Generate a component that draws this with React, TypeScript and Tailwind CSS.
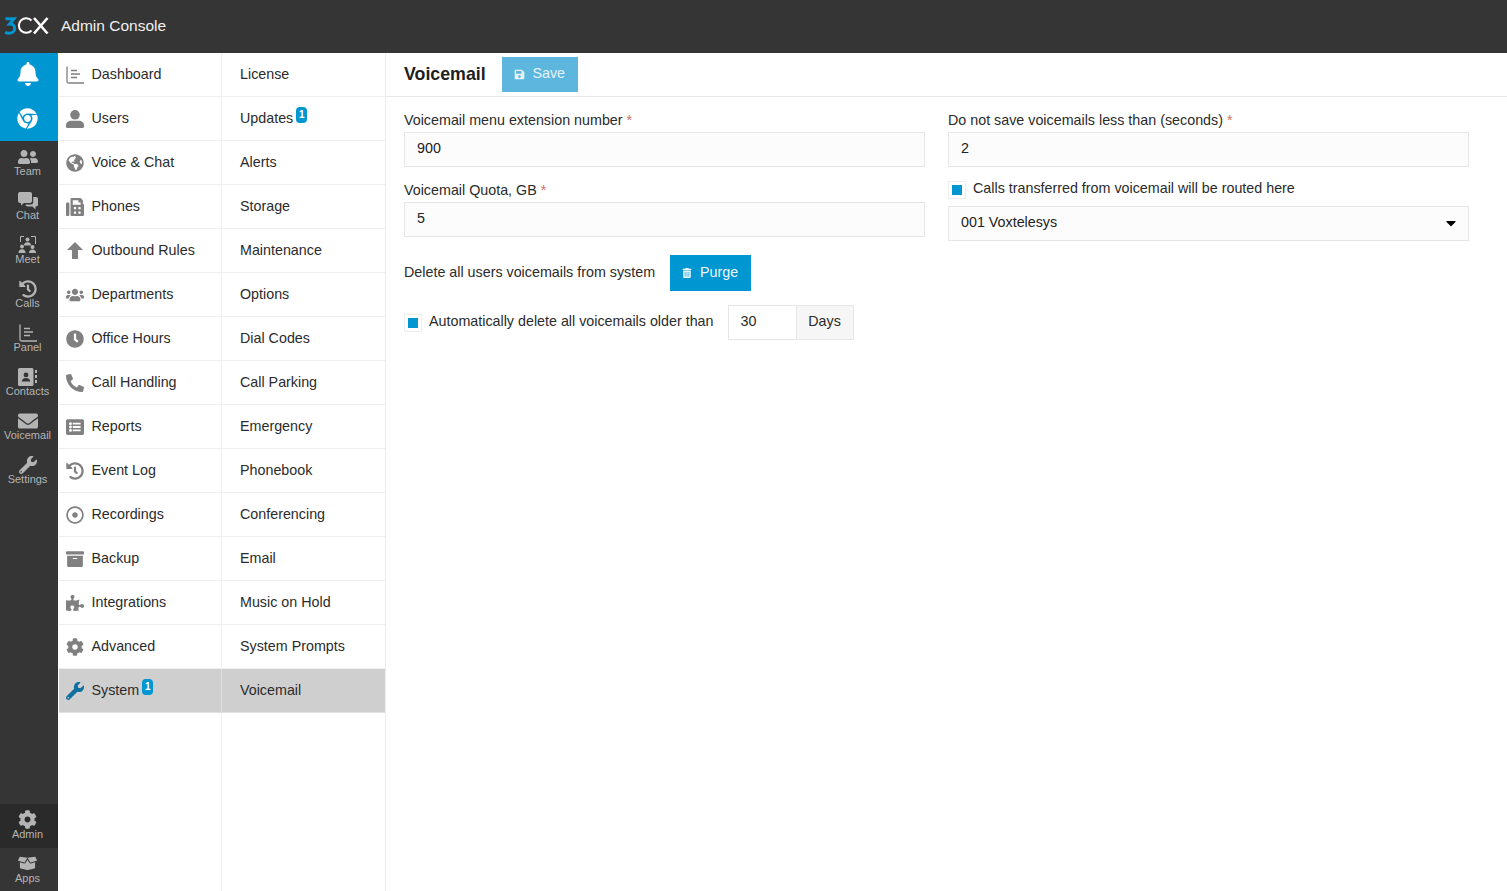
import React from "react";
import { FaBell, FaChrome, FaUserFriends, FaHistory, FaEnvelope, FaWrench, FaCog, FaBoxOpen, FaGlobeAmericas, FaFax, FaClock, FaPhone, FaListAlt, FaRegDotCircle, FaArchive, FaPuzzlePiece, FaSave, FaTrashAlt, FaCaretDown, FaUsers } from "react-icons/fa";

const Panel = ({ size = 18 }: { size?: number }) => (
  <svg width={size} height={size} viewBox="0 0 18 18" fill="none" stroke="currentColor" strokeWidth="1.3">
    <path d="M1 0.5V15.500Q1 17 2.500 17H18" />
    <path d="M5 4.500H11M5 8H14M5 11.500H11" />
  </svg>
);

const Meet = () => (
  <svg width="19" height="18" viewBox="0 0 19 18" fill="currentColor">
    <path d="M2.500 6V.5H6M13 .5H17.500V8" fill="none" stroke="currentColor" strokeWidth="1" />
    <circle cx="9.500" cy="3.400" r="2" />
    <path d="M6 9.500Q6 6.300 9.500 6.300T13 9.500Z" />
    <circle cx="4" cy="10.500" r="2" />
    <path d="M0.500 17Q.5 13.200 4 13.200T7.500 17Z" />
    <circle cx="14.500" cy="11" r="2" />
    <path d="M11 17Q11 13.500 14.500 13.500T18 17Z" />
  </svg>
);

const Contacts = () => (
  <svg width="19" height="18" viewBox="0 0 19 18" fill="currentColor">
    <path fillRule="evenodd" d="M1.500 0H14a1.500 1.500 0 0 1 1.500 1.500V16.500A1.500 1.500 0 0 1 14 18H1.500A1.500 1.500 0 0 1 0 16.500V1.500A1.500 1.500 0 0 1 1.500 0ZM8 4.500a2.400 2.400 0 1 0 0 4.800a2.400 2.400 0 0 0 0-4.800ZM3.800 13.500h8.400c0-2.200-1.700-3.500-4.200-3.500s-4.200 1.300-4.200 3.500Z" />
    <rect x="17" y="2" width="2" height="3" />
    <rect x="17" y="7" width="2" height="3" />
    <rect x="17" y="12" width="2" height="3" />
  </svg>
);

const Chat = () => (
  <svg width="20" height="18" viewBox="0 0 20 18" fill="currentColor">
    <path d="M2 0H12a2 2 0 0 1 2 2V9a2 2 0 0 1-2 2H6L3 13.500V11H2a2 2 0 0 1-2-2V2a2 2 0 0 1 2-2Z" />
    <path d="M15.200 5H18a2 2 0 0 1 2 2V12.500a2 2 0 0 1-2 2H17.500V17.500L14.500 14.500H9.500a2 2 0 0 1-2-2H13a2.200 2.200 0 0 0 2.200-2.200Z" />
  </svg>
);

const User = () => (
  <svg width="18" height="18" viewBox="0 0 18 18" fill="currentColor">
    <circle cx="9" cy="4.800" r="4.800" />
    <path d="M0 15.500C0 12.300 2.500 10.800 5 10.800H13C15.500 10.800 18 12.300 18 15.500V16.500A1.500 1.500 0 0 1 16.500 18H1.500A1.500 1.500 0 0 1 0 16.500Z" />
  </svg>
);

const Up = () => (
  <svg width="16" height="17" viewBox="0 0 16 17" fill="currentColor">
    <path d="M8 0L16 8H11V17H5V8H0Z" />
  </svg>
);

const Logo = () => (
  <svg width="46" height="20" viewBox="0 0 46 20" fill="none">
    <path d="M1.500 2.800H10L5.600 8C8.800 7.800 10.700 9.500 10.700 12.400C10.700 15.800 7.800 17.200 5 17.200C3.500 17.200 2.200 16.800 1.200 16.200" stroke="#0096d1" strokeWidth="3" />
    <path d="M27.500 4.500A7.300 7.300 0 1 0 27.500 14.500" stroke="#fff" strokeWidth="2" />
    <path d="M30 2L43.500 17.500M43.500 2L30 17.500" stroke="#fff" strokeWidth="2.600" />
  </svg>
);

const Badge = () => (
  <span className="relative -top-[4px] ml-[3px] inline-flex h-4 w-[11px] items-center justify-center rounded-[4px] bg-[#0096d1] text-[10px] font-bold leading-none text-white">1</span>
);

const rail = [
  { l: "Team", i: <FaUserFriends size={20} /> },
  { l: "Chat", i: <Chat /> },
  { l: "Meet", i: <Meet /> },
  { l: "Calls", i: <FaHistory size={18} /> },
  { l: "Panel", i: <Panel /> },
  { l: "Contacts", i: <Contacts /> },
  { l: "Voicemail", i: <FaEnvelope size={20} /> },
  { l: "Settings", i: <FaWrench size={18} /> },
];

const menu: [string, React.ReactNode, string, boolean?][] = [
  ["Dashboard", <Panel />, "License"],
  ["Users", <User />, "Updates", true],
  ["Voice & Chat", <FaGlobeAmericas size={18} />, "Alerts"],
  ["Phones", <FaFax size={18} />, "Storage"],
  ["Outbound Rules", <Up />, "Maintenance"],
  ["Departments", <FaUsers size={18} />, "Options"],
  ["Office Hours", <FaClock size={18} />, "Dial Codes"],
  ["Call Handling", <FaPhone size={18} className="-scale-x-100" />, "Call Parking"],
  ["Reports", <FaListAlt size={18} />, "Emergency"],
  ["Event Log", <FaHistory size={18} />, "Phonebook"],
  ["Recordings", <FaRegDotCircle size={18} />, "Conferencing"],
  ["Backup", <FaArchive size={18} />, "Email"],
  ["Integrations", <FaPuzzlePiece size={18} />, "Music on Hold"],
  ["Advanced", <FaCog size={18} />, "System Prompts"],
];

const Input = ({ v }: { v: string }) => (
  <div className="flex h-[35px] items-center border border-[#e6e6e6] bg-[#fcfcfc] pb-[2px] pl-3 text-[#222]">{v}</div>
);

const Req = () => <span className="ml-1 text-[#d9705f]">*</span>;

const Check = () => (
  <span className="flex h-[18px] w-[18px] shrink-0 items-center justify-center border border-[#eeeeee] bg-white">
    <span className="h-[10px] w-[10px] bg-[#0096d1]" />
  </span>
);

export default function App() {
  return (
    <div className="flex h-[891px] w-[1507px] flex-col overflow-hidden bg-white font-['Liberation_Sans',sans-serif] text-[14.3px] text-[#2b2b2b]">
      <header className="flex h-[53px] shrink-0 items-center bg-[#353535] pb-[2px] pl-[4px] text-[#f0f0f0]">
        <Logo />
        <span className="ml-[11px] text-[15.5px]">Admin Console</span>
      </header>
      <div className="flex min-h-0 flex-1">
        <nav className="flex w-[58px] shrink-0 flex-col bg-[#353535] text-[#b4b4b4]">
          <div className="flex h-[44px] items-center justify-center bg-[#0096d1] pb-[2px] pr-[3px] text-white"><FaBell size={24} /></div>
          <div className="flex h-[44px] items-center justify-center bg-[#0096d1] pb-[2px] pr-[3px] text-white"><FaChrome size={21} /></div>
          {rail.map((r) => (
            <div key={r.l} className="flex h-[44px] flex-col items-center pr-[3px] pt-[6px] text-[11px] leading-[12px]">
              <span className="flex h-[20px] items-center justify-center">{r.i}</span>
              <span className="-mt-[2px]">{r.l}</span>
            </div>
          ))}
          <div className="mt-auto flex h-[44px] flex-col items-center bg-[#2a2a2a] pr-[3px] pt-[5px] text-[11px] leading-[12px]">
            <span className="flex h-[20px] items-center justify-center"><FaCog size={19} /></span>
            <span className="-mt-[1px]">Admin</span>
          </div>
          <div className="flex h-[43px] flex-col items-center pr-[3px] pt-[5px] text-[11px] leading-[12px]">
            <span className="flex h-[20px] items-center justify-center"><FaBoxOpen size={19} /></span>
            <span className="-mt-[1px]">Apps</span>
          </div>
        </nav>
        <div className="grid w-[328px] shrink-0 grid-cols-[163px_163px] content-start border-r border-[#eeeeee] pl-px">
          {menu.map(([a, icon, b, badge]) => (
            <React.Fragment key={a}>
              <div className="flex h-[44px] items-center border-r border-b border-[#eeeeee] pl-[7px]">
                <span className="flex w-[18px] justify-center text-[#808080]">{icon}</span>
                <span className="ml-[7.5px]">{a}</span>
              </div>
              <div className="flex h-[44px] items-center border-b border-[#eeeeee] pl-[18px]">
                <span>{b}</span>
                {badge && <Badge />}
              </div>
            </React.Fragment>
          ))}
          <div className="flex h-[44px] items-center border-r border-b border-[#e0e0e0] bg-[#cfcfcf] pl-[7px]">
            <span className="flex w-[18px] justify-center text-[#0f6f9e]"><FaWrench size={18} /></span>
            <span className="ml-[7.5px]">System</span>
            <Badge />
          </div>
          <div className="flex h-[44px] items-center border-b border-[#e0e0e0] bg-[#cfcfcf] pl-[18px]">Voicemail</div>
          <div className="h-[178px] border-r border-[#eeeeee]" />
        </div>
        <main className="min-w-0 flex-1">
          <div className="flex h-[44px] items-start border-b border-[#e8e8e8] pl-[18px] pt-[4px]">
            <h1 className="mt-[6px] text-[17.8px] font-bold leading-[22px] text-[#1f1f1f]">Voicemail</h1>
            <button className="ml-4 flex h-[35px] w-[76px] items-center justify-center gap-[7px] bg-[#5cb6dd] text-[#e6f4fa]">
              <FaSave size={11} />
              <span className="-mt-[2px]">Save</span>
            </button>
          </div>
          <div className="grid grid-cols-[521px_521px] gap-x-[23px] pl-[18px] pt-[15px]">
            <div>
              <div className="h-5 leading-[16px]">Voicemail menu extension number<Req /></div>
              <Input v="900" />
              <div className="mt-[15px] h-5 leading-[16px]">Voicemail Quota, GB<Req /></div>
              <Input v="5" />
              <div className="mt-[18px] flex items-center">
                <span className="-mt-[1px]">Delete all users voicemails from system</span>
                <button className="ml-[14.5px] flex h-9 w-[81px] items-center justify-center gap-[8px] bg-[#0096d1] text-[#f0f8fc]">
                  <FaTrashAlt size={10} />
                  <span className="-mt-[1px]">Purge</span>
                </button>
              </div>
              <div className="mt-[14px] flex items-center">
                <Check />
                <span className="ml-[7px] -mt-[1px]">Automatically delete all voicemails older than</span>
                <div className="ml-[14px] flex h-[35px] w-[126px] border border-[#e6e6e6]">
                  <span className="flex w-[68px] items-center border-r border-[#e6e6e6] pb-[2px] pl-3">30</span>
                  <span className="flex flex-1 items-center justify-center bg-[#f6f6f6] pb-[2px]">Days</span>
                </div>
              </div>
            </div>
            <div>
              <div className="h-5 leading-[16px]">Do not save voicemails less than (seconds)<Req /></div>
              <Input v="2" />
              <div className="mt-[13px] flex h-[26px] items-start">
                <span className="mt-[1px]"><Check /></span>
                <span className="ml-[7px] leading-[16px]">Calls transferred from voicemail will be routed here</span>
              </div>
              <div className="flex h-[35px] items-center justify-between border border-[#e6e6e6] bg-[#fcfcfc] pb-[2px] pl-3 pr-[9px] text-[#222]">
                <span>001 Voxtelesys</span>
                <FaCaretDown size={16} className="text-black" />
              </div>
            </div>
          </div>
        </main>
      </div>
    </div>
  );
}
